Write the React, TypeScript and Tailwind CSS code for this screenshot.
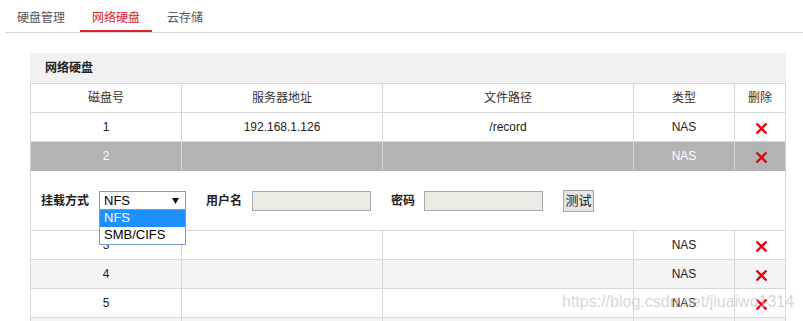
import React from "react";

const FONT = "font-['Arial','Liberation_Sans','Noto_Sans_CJK_SC',sans-serif]";

function XIcon() {
  return (
    <svg width="13" height="13" viewBox="0 0 13 13" className="mt-[2px] ml-[2px]">
      <path d="M1.5 1.5 L11.5 11.5 M11.5 1.5 L1.5 11.5" stroke="#e60012" strokeWidth="2.4" strokeLinecap="butt" fill="none" />
    </svg>
  );
}

const cols = "grid grid-cols-[152px_201px_251px_101px_51px]";

function Row({
  cells,
  bg,
  text,
  borderB,
  header,
}: {
  cells: string[];
  bg: string;
  text: string;
  borderB: string;
  header?: boolean;
}) {
  return (
    <div className={`${cols} h-[29px] border-b ${borderB} ${bg} ${text}`}>
      {cells.map((c, i) => (
        <div
          key={i}
          className={`flex items-center justify-center border-r border-[#d7d7d7] ${i === 0 ? "border-l" : ""}`}
        >
          {!header && i === 4 ? <XIcon /> : c}
        </div>
      ))}
    </div>
  );
}

export default function App() {
  return (
    <div className={`relative w-[803px] h-[321px] overflow-hidden bg-white ${FONT} text-[12px] text-[#222]`}>
      {/* tabs */}
      <div className="ml-[5px] flex h-[33px] border-b border-[#d2d2d2]">
        <div className="mr-[3px] h-[32px] px-3 pt-[10px] leading-[16px] text-[12px] text-[#555]">硬盘管理</div>
        <div className="mr-[3px] h-[32px] border-b-2 border-[#d6232f] px-3 pt-[10px] leading-[16px] text-[12px] text-[#d6232f]">
          网络硬盘
        </div>
        <div className="h-[32px] px-3 pt-[10px] leading-[16px] text-[12px] text-[#555]">云存储</div>
      </div>

      {/* panel */}
      <div className="ml-[30px] mt-[20px] w-[756px]">
        <div className="flex h-[30px] items-center bg-[#f1f1f1] pl-[15px] font-bold text-[#222]">网络硬盘</div>
        <div className="border-t border-[#d7d7d7]">
          <Row header cells={["磁盘号", "服务器地址", "文件路径", "类型", "删除"]} bg="bg-white" text="text-[#333]" borderB="border-[#d7d7d7]" />
          <Row cells={["1", "192.168.1.126", "/record", "NAS", ""]} bg="bg-white" text="text-[#222]" borderB="border-[#d7d7d7]" />
          <Row cells={["2", "", "", "NAS", ""]} bg="bg-[#b3b3b3]" text="text-white" borderB="border-[#b3b3b3]" />

          {/* expanded config row */}
          <div className="relative flex h-[60px] items-center border-x border-b border-[#d7d7d7] bg-white">
            <span className="ml-[10px] font-bold text-[#222]">挂载方式</span>
            <div className="ml-[10px] flex h-[20px] w-[87px] items-center justify-between border border-[#7a9cd3] bg-white pl-[4px] pr-[6px] text-[13px] text-black">
              <span>NFS</span>
              <svg width="7" height="6" viewBox="0 0 7 6">
                <path d="M0 0 H7 L3.5 6 Z" fill="#111" />
              </svg>
            </div>
            <span className="ml-[20px] font-bold text-[#222]">用户名</span>
            <div className="ml-[10px] h-[20px] w-[119px] border border-[#a9a9a9] bg-[#ebebe4]" />
            <span className="ml-[20px] font-bold text-[#222]">密码</span>
            <div className="ml-[9px] h-[20px] w-[119px] border border-[#a9a9a9] bg-[#ebebe4]" />
            <button className="ml-[20px] mt-[1px] flex h-[22px] w-[31px] items-center justify-center border border-[#a5a5a5] bg-[#e4e4e4] text-[13px] leading-[16px] text-[#222]">
              测试
            </button>

            {/* open dropdown list */}
            <div className="absolute left-[68px] top-[38px] z-10 w-[87px] border border-[#7a9cd3] bg-white text-[13px] leading-[16px]">
              <div className="h-[17px] bg-[#1e90ff] pl-[4px] text-white">NFS</div>
              <div className="h-[17px] pl-[4px] text-black">SMB/CIFS</div>
            </div>
          </div>

          <Row cells={["3", "", "", "NAS", ""]} bg="bg-white" text="text-[#222]" borderB="border-[#d7d7d7]" />
          <Row cells={["4", "", "", "NAS", ""]} bg="bg-[#f4f4f4]" text="text-[#222]" borderB="border-[#d7d7d7]" />
          <Row cells={["5", "", "", "NAS", ""]} bg="bg-white" text="text-[#222]" borderB="border-[#d7d7d7]" />
          <Row cells={["", "", "", "", ""]} bg="bg-[#f4f4f4]" text="text-[#222]" borderB="border-[#d7d7d7]" header />
        </div>
      </div>

      {/* watermark */}
      <div className="pointer-events-none absolute left-[562px] top-[292px] text-[16px] leading-[20px] text-[rgba(200,200,200,0.75)] font-['Arial','Liberation_Sans',sans-serif]">
        https://blog.csdn.net/jiuaiwo1314
      </div>
    </div>
  );
}
